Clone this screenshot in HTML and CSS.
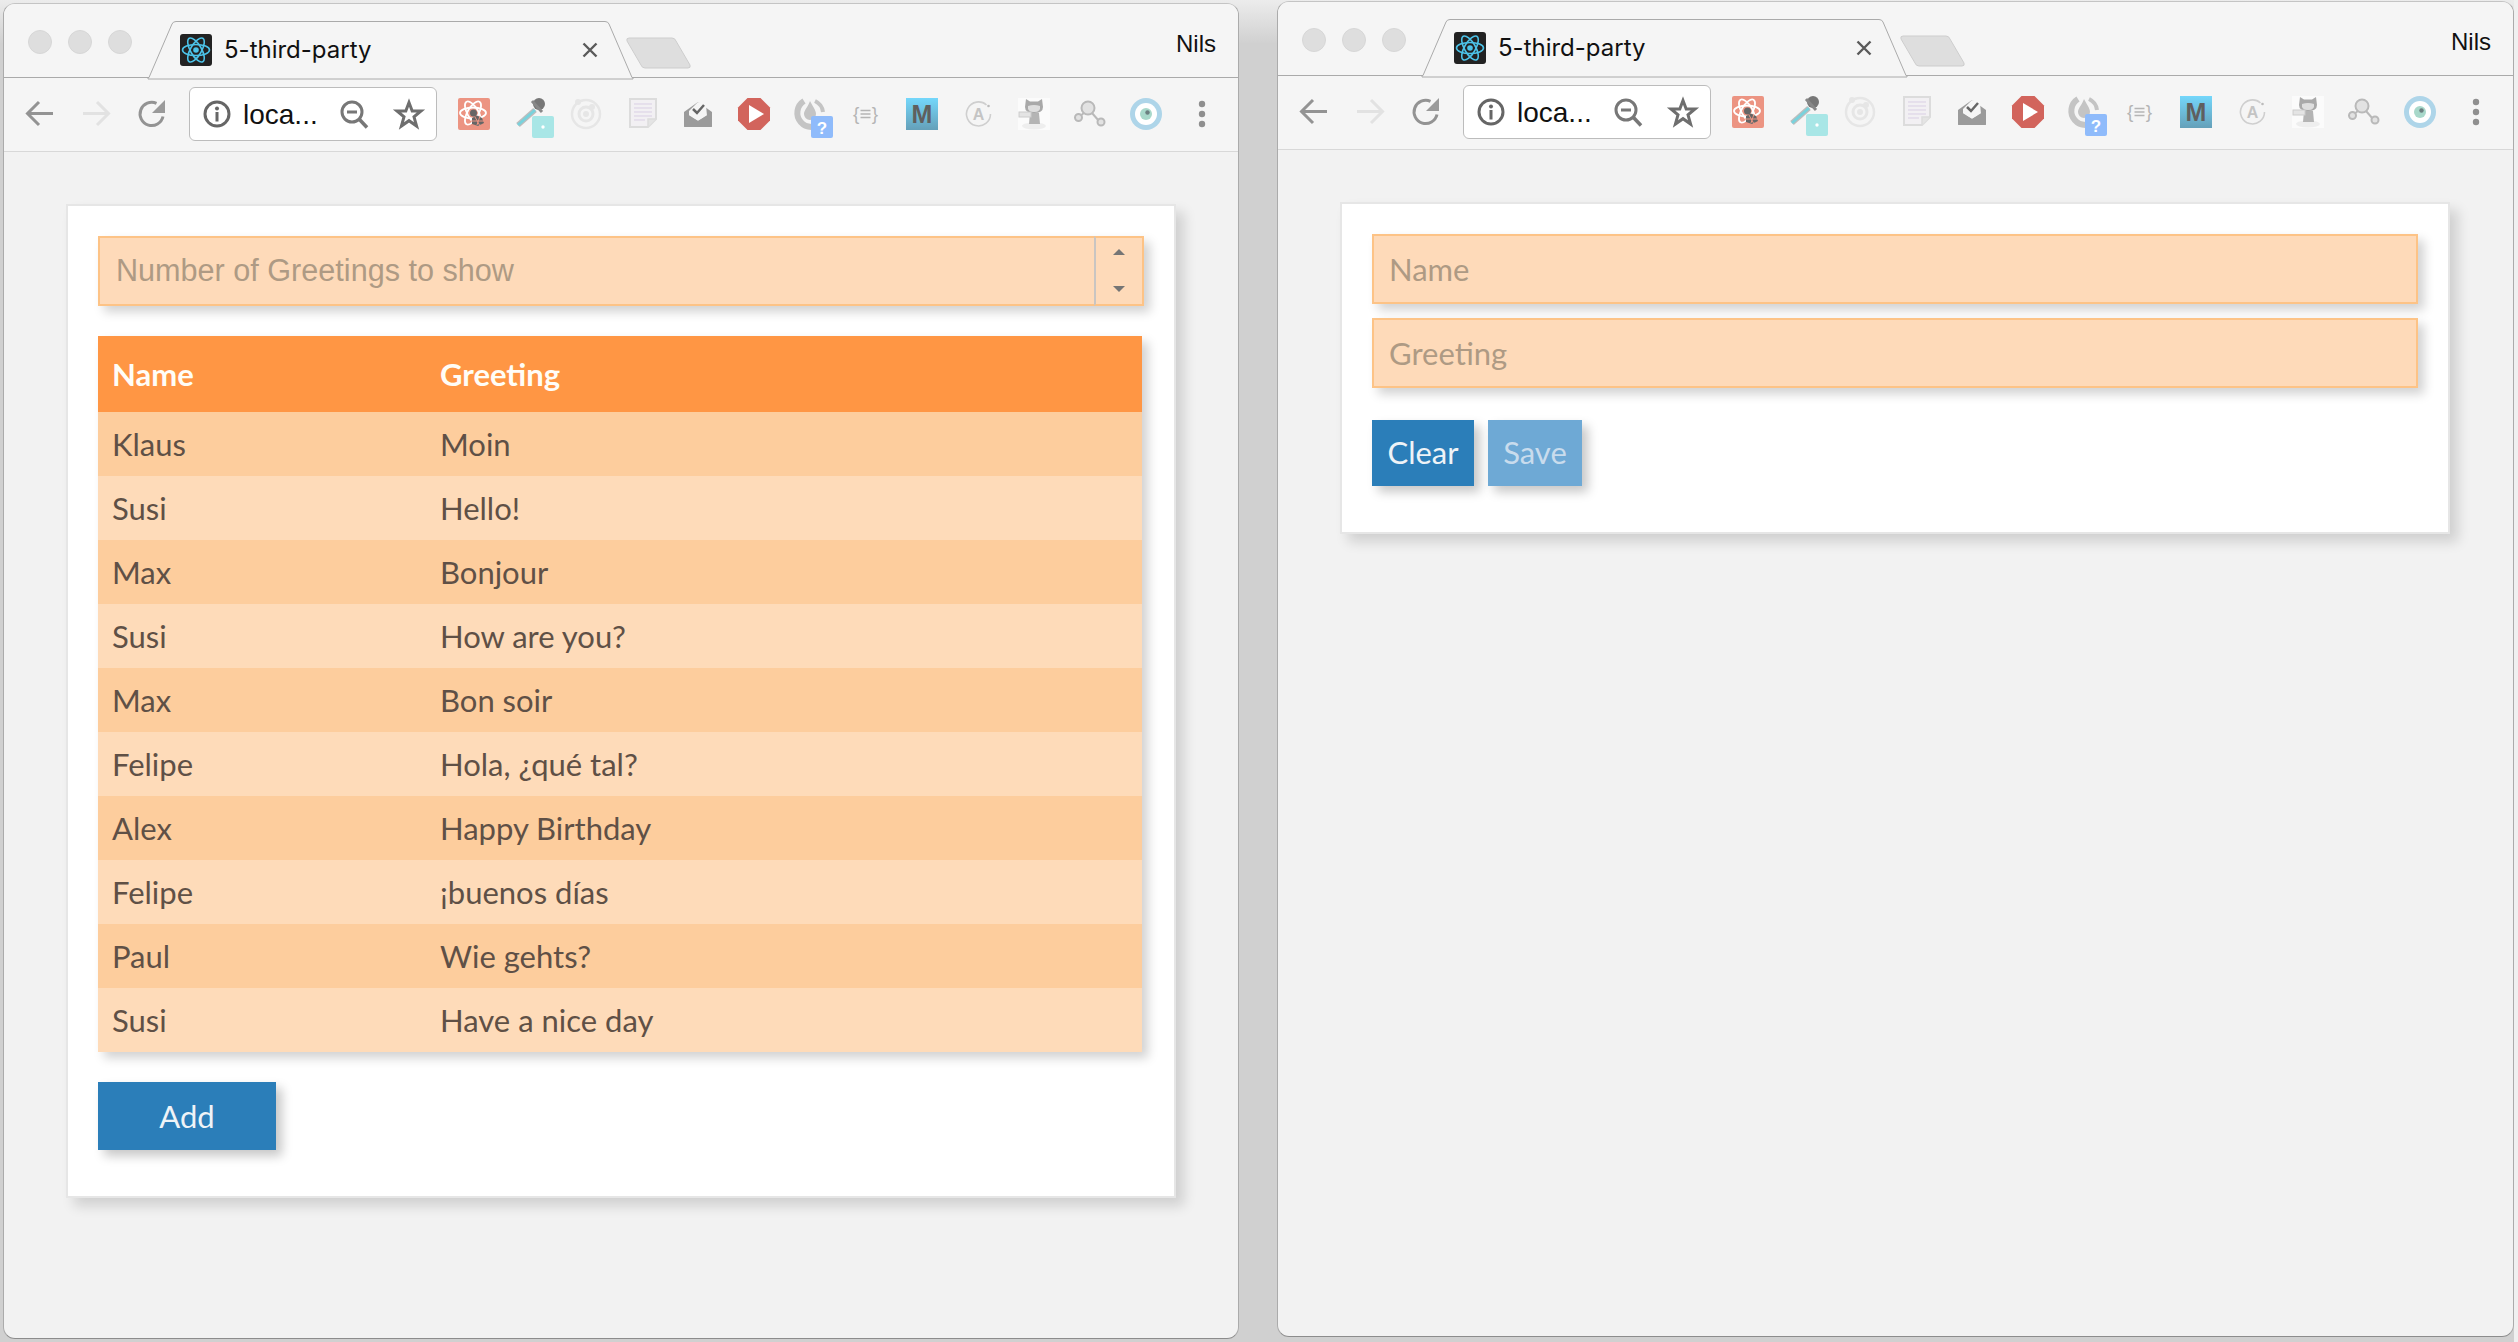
FILE: index.html
```html
<!DOCTYPE html>
<html lang="en">
<head>
<meta charset="utf-8">
<title>5-third-party</title>
<link rel="stylesheet" href="styles.css">
</head>
<body>
<svg class="sprite" width="0" height="0" aria-hidden="true">
  <defs>
    <g id="i-favicon">
      <rect width="32" height="32" rx="3" fill="#222"/>
      <g fill="none" stroke="#4cc3e8" stroke-width="1.6">
        <ellipse cx="16" cy="16" rx="13.5" ry="5.5"/>
        <ellipse cx="16" cy="16" rx="13.5" ry="5.5" transform="rotate(60 16 16)"/>
        <ellipse cx="16" cy="16" rx="13.5" ry="5.5" transform="rotate(120 16 16)"/>
      </g>
      <circle cx="16" cy="16" r="2.8" fill="#4cc3e8"/>
    </g>
    <g id="i-back"><path d="M29 15.5H5M15 4 3.5 15.5 15 27" fill="none" stroke-width="3"/></g>
    <g id="i-forward"><path d="M3 15.5H27M17 4 28.5 15.5 17 27" fill="none" stroke-width="3"/></g>
    <g id="i-reload">
      <path d="M27 18.5A11.6 11.6 0 1 1 20.500 5.400" fill="none" stroke-width="3"/>
      <path d="M29 2V15H16Z" stroke="none" fill="#9a9a9a"/>
    </g>
    <g id="i-info">
      <circle cx="14" cy="14" r="12" fill="none" stroke="#666" stroke-width="3"/>
      <circle cx="14" cy="8.500" r="2" fill="#666"/>
      <rect x="12.500" y="12" width="3" height="9.500" fill="#666"/>
    </g>
    <g id="i-zoom">
      <circle cx="12" cy="12" r="10" fill="none" stroke="#777" stroke-width="3"/>
      <path d="M7 12H17" stroke="#777" stroke-width="3"/>
      <path d="M19.500 19.500 27 27.500" stroke="#777" stroke-width="3.500"/>
    </g>
    <g id="i-star"><path d="M14 2.500 17.200 11H26L19 16.800 21.600 26 14 20.700 6.400 26 9 16.800 2 11H10.800Z" fill="none" stroke="#6e6e6e" stroke-width="3" stroke-linejoin="miter"/></g>
    <g id="i-devtools">
      <rect width="32" height="32" rx="2" fill="#ec9482"/>
      <g fill="none" stroke="#fff" stroke-width="1.800">
        <ellipse cx="15" cy="15" rx="13" ry="5.500"/>
        <ellipse cx="15" cy="15" rx="13" ry="5.500" transform="rotate(60 15 15)"/>
        <ellipse cx="15" cy="15" rx="13" ry="5.500" transform="rotate(120 15 15)"/>
      </g>
      <circle cx="15.500" cy="15" r="3.500" fill="#666"/>
      <path d="M14 20 19 17.500 24 20 26 25 20 28 14 26Z" fill="#666"/>
      <path d="M17 19 22 28M22 18 19 27M13 23H27" stroke="#ec9482" stroke-width="1"/>
    </g>
    <g id="i-dropper">
      <circle cx="25" cy="6" r="6" fill="#777"/>
      <path d="M18 3 28 14" stroke="#888" stroke-width="3"/>
      <path d="M21 12 4 27" stroke="#bdbdbd" stroke-width="5.500"/>
      <path d="M21 12 4 27" stroke="#79d2dc" stroke-width="3"/>
      <rect x="18" y="18" width="22" height="22" rx="2" fill="#a8e6e6"/>
      <circle cx="29" cy="29" r="1.700" fill="#fff"/>
    </g>
    <g id="i-ion" fill="none" stroke="#e6e6e6">
      <circle cx="16" cy="16" r="14" stroke-width="2.500"/>
      <circle cx="16" cy="16" r="7" stroke-width="3"/>
      <circle cx="16" cy="16" r="3" fill="#e6e6e6" stroke="none"/>
      <circle cx="8" cy="4" r="3" fill="#e6e6e6" stroke="none"/>
      <circle cx="22" cy="9" r="3" fill="#e6e6e6" stroke="none"/>
    </g>
    <g id="i-doc" transform="translate(3 0)">
      <path d="M1 1H27V21L19 29H1Z" fill="#f2f0f3" stroke="#dcdcdc" stroke-width="2"/>
      <path d="M19 29V21H27" fill="#e4e4e4" stroke="#dcdcdc" stroke-width="1.500"/>
      <path d="M5 6H23M5 10H23M5 14H23M5 18H23M5 22H16" stroke="#d9cfe4" stroke-width="1"/>
    </g>
    <g id="i-mail" transform="translate(2 2)">
      <path d="M0 12 14 2 28 12V26Q28 27 27 27H1Q0 27 0 26Z" fill="#9b9b9b"/>
      <path d="M5 11 14 2 22 5 23 16 14 21 5 16Z" fill="#f5f5f5"/>
      <path d="M9 9 13 13 20 5" fill="none" stroke="#666" stroke-width="2.500"/>
      <path d="M0 12 14 21 28 12V26Q28 27 27 27H1Q0 27 0 26Z" fill="#9b9b9b"/>
    </g>
    <g id="i-stop">
      <path d="M9.500 0H22.500L32 9.500V22.500L22.500 32H9.500L0 22.500V9.500Z" fill="#d2645c"/>
      <path d="M11 7 26 16 11 25Z" fill="#fff"/>
    </g>
    <g id="i-flame">
      <path d="M10 3A14 14 0 1 0 28 24" fill="none" stroke="#c4c4c4" stroke-width="6"/>
      <path d="M21 3A14 14 0 0 1 29 14" fill="none" stroke="#c4c4c4" stroke-width="4"/>
      <path d="M16 3C19 9 22 12 22 16A6 6 0 0 1 10 16C10 12 14 9 16 3Z" fill="#c4c4c4"/>
      <rect x="17" y="18" width="22" height="22" rx="2" fill="#8fbbfb"/>
      <text x="28" y="36" class="glyph-q">?</text>
    </g>
    <g id="i-json">
      <text x="3" y="22" class="glyph-brace">{</text>
      <text x="28" y="22" class="glyph-brace glyph-brace-end">}</text>
      <path d="M10.500 12.500H20.500M10.500 16H20.500M10.500 19.500H20.500" stroke="#b5b5b5" stroke-width="1.400"/>
    </g>
    <linearGradient id="g-m" x1="0" y1="0" x2="0" y2="1">
      <stop offset="0" stop-color="#74d7fb"/>
      <stop offset="1" stop-color="#65a0b9"/>
    </linearGradient>
    <g id="i-m">
      <rect width="32" height="32" fill="url(#g-m)"/>
      <text x="16" y="25" class="glyph-m">M</text>
    </g>
    <g id="i-a">
      <path d="M24.500 7A12 12 0 1 0 28.500 16" fill="none" stroke="#cfcfcf" stroke-width="1.600"/>
      <circle cx="26.500" cy="8" r="1.300" fill="#bbb"/>
      <text x="16.500" y="22" class="glyph-a">A</text>
    </g>
    <g id="i-octocat">
      <rect width="32" height="32" fill="#fbfbfb"/>
      <ellipse cx="16" cy="28" rx="12" ry="3.500" fill="#eee"/>
      <path d="M8 1 12 3.500H20L24 1 25 9Q25 15 16 15T7 9Z" fill="#a9a9a9"/>
      <path d="M10 8Q16 6 22 8 23 14 16 14T10 8Z" fill="#dedede"/>
      <path d="M12 15H21L22 26H11Z" fill="#b4b4b4"/>
      <rect x="1" y="14" width="12" height="5" fill="#e4e4e4" stroke="#ccc"/>
    </g>
    <g id="i-nodes" fill="#e2e2e2" stroke="#b9b9b9" stroke-width="2">
      <path d="M10 15 6 18M18 15 25 23" fill="none"/>
      <circle cx="14" cy="10" r="6.500"/>
      <circle cx="4.500" cy="19.500" r="3.500"/>
      <circle cx="27" cy="24" r="3.500"/>
    </g>
    <g id="i-eye">
      <circle cx="16" cy="16" r="16" fill="#aed5e9"/>
      <circle cx="16" cy="16" r="11" fill="#fff"/>
      <circle cx="16" cy="16" r="6" fill="#a8d8ca"/>
      <circle cx="17.500" cy="14.500" r="2.200" fill="#6b7f80"/>
    </g>
    <g id="i-more" fill="#8f8f8f">
      <circle cx="16" cy="6" r="3.200"/>
      <circle cx="16" cy="16" r="3.200"/>
      <circle cx="16" cy="26" r="3.200"/>
    </g>
    <g id="i-tab-close"><path d="M1.500 1.500 14.500 14.500M14.500 1.500 1.500 14.500" stroke="#5a5a5a" stroke-width="2.400"/></g>
  </defs>
</svg>

<section class="window window-left">
  <header class="tabstrip">
    <div class="traffic"><span class="light"></span><span class="light"></span><span class="light"></span></div>
    <div class="tab">
      <svg class="tab-shape" viewBox="0 0 485 57" preserveAspectRatio="none"><path d="M0 56.500H1L24 3Q25 .5 28 .5H457Q460 .5 461 3L484 56.500H485V58H0Z"/></svg>
      <svg class="favicon" viewBox="0 0 32 32"><use href="#i-favicon"/></svg>
      <span class="tab-title">5-third-party</span>
      <svg class="tab-close" viewBox="0 0 16 16"><use href="#i-tab-close"/></svg>
    </div>
    <svg class="newtab" viewBox="0 0 66 32"><path d="M3 1H46Q49 1 50 4L64 28Q65 31 62 31H19Q16 31 15 28L1 4Q0 1 3 1Z"/></svg>
    <span class="profile">Nils</span>
  </header>
  <nav class="toolbar">
    <svg class="tool nav-on" viewBox="0 0 32 32"><use href="#i-back"/></svg>
    <svg class="tool nav-off" viewBox="0 0 32 32"><use href="#i-forward"/></svg>
    <svg class="tool nav-on" viewBox="0 0 32 32"><use href="#i-reload"/></svg>
    <div class="omnibox">
      <svg class="omni-icon" viewBox="0 0 28 28"><use href="#i-info"/></svg>
      <span class="omni-url">loca...</span>
      <svg class="omni-icon" viewBox="0 0 28 28"><use href="#i-zoom"/></svg>
      <svg class="omni-icon" viewBox="0 0 28 28"><use href="#i-star"/></svg>
    </div>
    <svg class="tool" viewBox="0 0 32 32"><use href="#i-devtools"/></svg>
    <svg class="tool" viewBox="0 0 32 32"><use href="#i-dropper"/></svg>
    <svg class="tool" viewBox="0 0 32 32"><use href="#i-ion"/></svg>
    <svg class="tool" viewBox="0 0 32 32"><use href="#i-doc"/></svg>
    <svg class="tool" viewBox="0 0 32 32"><use href="#i-mail"/></svg>
    <svg class="tool" viewBox="0 0 32 32"><use href="#i-stop"/></svg>
    <svg class="tool" viewBox="0 0 32 32"><use href="#i-flame"/></svg>
    <svg class="tool" viewBox="0 0 32 32"><use href="#i-json"/></svg>
    <svg class="tool" viewBox="0 0 32 32"><use href="#i-m"/></svg>
    <svg class="tool" viewBox="0 0 32 32"><use href="#i-a"/></svg>
    <svg class="tool" viewBox="0 0 32 32"><use href="#i-octocat"/></svg>
    <svg class="tool" viewBox="0 0 32 32"><use href="#i-nodes"/></svg>
    <svg class="tool" viewBox="0 0 32 32"><use href="#i-eye"/></svg>
    <svg class="tool" viewBox="0 0 32 32"><use href="#i-more"/></svg>
  </nav>
  <main class="content">
    <div class="card">
      <div class="number-field">
        <input class="field field-number" type="text" placeholder="Number of Greetings to show">
        <div class="stepper"><span class="step-up"></span><span class="step-down"></span></div>
      </div>
      <table class="greetings">
        <thead><tr><th>Name</th><th>Greeting</th></tr></thead>
        <tbody>
          <tr><td>Klaus</td><td>Moin</td></tr>
          <tr><td>Susi</td><td>Hello!</td></tr>
          <tr><td>Max</td><td>Bonjour</td></tr>
          <tr><td>Susi</td><td>How are you?</td></tr>
          <tr><td>Max</td><td>Bon soir</td></tr>
          <tr><td>Felipe</td><td>Hola, ¿qué tal?</td></tr>
          <tr><td>Alex</td><td>Happy Birthday</td></tr>
          <tr><td>Felipe</td><td>¡buenos días</td></tr>
          <tr><td>Paul</td><td>Wie gehts?</td></tr>
          <tr><td>Susi</td><td>Have a nice day</td></tr>
        </tbody>
      </table>
      <button class="btn btn-add" type="button">Add</button>
    </div>
  </main>
</section>

<section class="window window-right">
  <header class="tabstrip">
    <div class="traffic"><span class="light"></span><span class="light"></span><span class="light"></span></div>
    <div class="tab">
      <svg class="tab-shape" viewBox="0 0 485 57" preserveAspectRatio="none"><path d="M0 56.500H1L24 3Q25 .5 28 .5H457Q460 .5 461 3L484 56.500H485V58H0Z"/></svg>
      <svg class="favicon" viewBox="0 0 32 32"><use href="#i-favicon"/></svg>
      <span class="tab-title">5-third-party</span>
      <svg class="tab-close" viewBox="0 0 16 16"><use href="#i-tab-close"/></svg>
    </div>
    <svg class="newtab" viewBox="0 0 66 32"><path d="M3 1H46Q49 1 50 4L64 28Q65 31 62 31H19Q16 31 15 28L1 4Q0 1 3 1Z"/></svg>
    <span class="profile">Nils</span>
  </header>
  <nav class="toolbar">
    <svg class="tool nav-on" viewBox="0 0 32 32"><use href="#i-back"/></svg>
    <svg class="tool nav-off" viewBox="0 0 32 32"><use href="#i-forward"/></svg>
    <svg class="tool nav-on" viewBox="0 0 32 32"><use href="#i-reload"/></svg>
    <div class="omnibox">
      <svg class="omni-icon" viewBox="0 0 28 28"><use href="#i-info"/></svg>
      <span class="omni-url">loca...</span>
      <svg class="omni-icon" viewBox="0 0 28 28"><use href="#i-zoom"/></svg>
      <svg class="omni-icon" viewBox="0 0 28 28"><use href="#i-star"/></svg>
    </div>
    <svg class="tool" viewBox="0 0 32 32"><use href="#i-devtools"/></svg>
    <svg class="tool" viewBox="0 0 32 32"><use href="#i-dropper"/></svg>
    <svg class="tool" viewBox="0 0 32 32"><use href="#i-ion"/></svg>
    <svg class="tool" viewBox="0 0 32 32"><use href="#i-doc"/></svg>
    <svg class="tool" viewBox="0 0 32 32"><use href="#i-mail"/></svg>
    <svg class="tool" viewBox="0 0 32 32"><use href="#i-stop"/></svg>
    <svg class="tool" viewBox="0 0 32 32"><use href="#i-flame"/></svg>
    <svg class="tool" viewBox="0 0 32 32"><use href="#i-json"/></svg>
    <svg class="tool" viewBox="0 0 32 32"><use href="#i-m"/></svg>
    <svg class="tool" viewBox="0 0 32 32"><use href="#i-a"/></svg>
    <svg class="tool" viewBox="0 0 32 32"><use href="#i-octocat"/></svg>
    <svg class="tool" viewBox="0 0 32 32"><use href="#i-nodes"/></svg>
    <svg class="tool" viewBox="0 0 32 32"><use href="#i-eye"/></svg>
    <svg class="tool" viewBox="0 0 32 32"><use href="#i-more"/></svg>
  </nav>
  <main class="content">
    <div class="card">
      <input class="field field-text" type="text" placeholder="Name">
      <input class="field field-text" type="text" placeholder="Greeting">
      <div class="actions">
        <button class="btn btn-clear" type="button">Clear</button>
        <button class="btn btn-save" type="button">Save</button>
      </div>
    </div>
  </main>
</section>
</body>
</html>
```

FILE: styles.css
```css
* { box-sizing: border-box; }

html, body { height: 100%; }

body {
  margin: 0;
  overflow: hidden;
  font-family: "Lato", "Liberation Sans", sans-serif;
  background:
    linear-gradient(to right, transparent 2514px, #f0f0f0 2514px),
    linear-gradient(to bottom, #ececec 0, #d0d0d0 44px);
}

.sprite { position: absolute; }

/* desktop windows */
.window {
  position: absolute;
  height: 1336px;
  display: flex;
  flex-direction: column;
  overflow: hidden;
  background: #f2f2f2;
  border: 1px solid #ababab;
  border-top-color: #c4c4c4;
  border-bottom-color: #8c8c8c;
  border-radius: 12px;
}

.window-left { left: 3px; top: 3px; width: 1236px; }
.window-right { left: 1277px; top: 1px; width: 1237px; }

/* tab strip */
.tabstrip {
  flex: none;
  display: flex;
  align-items: flex-start;
  height: 74px;
  background: #f5f5f5;
  border-bottom: 1px solid #aaa;
}

.traffic {
  display: flex;
  gap: 16px;
  margin: 26px 16px 0 24px;
}

.light {
  width: 24px;
  height: 24px;
  border-radius: 50%;
  background: #dedede;
  border: 1px solid #d7d7d7;
}

.tab {
  position: relative;
  flex: none;
  width: 485px;
  height: 57px;
  margin-top: 17px;
  padding: 13px 35px 0 32px;
  display: flex;
  align-items: flex-start;
}

.tab-shape {
  position: absolute;
  left: 0;
  top: 0;
  width: 485px;
  height: 57px;
  overflow: visible;
  fill: #f5f5f5;
  stroke: none;
}

.tab-shape path { stroke: #aaa; stroke-width: 1; }

.favicon {
  position: relative;
  flex: none;
  width: 32px;
  height: 32px;
}

.tab-title {
  position: relative;
  flex: 1;
  margin-left: 12px;
  font: 24px/32px "Inter", "Liberation Sans", sans-serif;
  color: #111;
}

.tab-close {
  position: relative;
  flex: none;
  width: 16px;
  height: 16px;
  margin-top: 8px;
}

.newtab {
  flex: none;
  width: 66px;
  height: 32px;
  margin: 33px 0 0 -7px;
  fill: #dedede;
  stroke: #cdcdcd;
  stroke-width: 1;
}

.profile {
  margin: 25px 22px 0 auto;
  font: 24px/30px "Liberation Sans", sans-serif;
  color: #111;
}

/* toolbar */
.toolbar {
  flex: none;
  display: flex;
  align-items: flex-start;
  gap: 24px;
  height: 74px;
  padding: 9px 0 0 20px;
  background: #f5f5f5;
  border-bottom: 1px solid #d8d8d8;
}

.tool {
  flex: none;
  width: 32px;
  height: 32px;
  margin-top: 11px;
  overflow: visible;
}

.nav-on { stroke: #939393; }
.nav-off { stroke: #e2e2e2; }

.omnibox {
  flex: none;
  display: flex;
  align-items: center;
  width: 248px;
  height: 54px;
  margin: 0 -3px;
  padding: 0 13px;
  background: #fff;
  border: 1px solid #bcbcbc;
  border-radius: 6px;
}

.omni-icon {
  flex: none;
  width: 28px;
  height: 28px;
  overflow: visible;
}

.omni-icon:last-child { margin-left: 27px; }

.omni-url {
  flex: 1;
  margin: 2px 0 0 12px;
  font: 28px/34px "Liberation Sans", sans-serif;
  color: #111;
}

/* page */
.content {
  flex: 1;
  padding: 52px 0 0 62px;
}

.card {
  width: 1110px;
  padding: 30px 30px 46px;
  background: #fff;
  border: 2px solid #e6e6e6;
  box-shadow: 8px 8px 12px rgba(0, 0, 0, .14);
}

.field {
  display: block;
  width: 100%;
  height: 70px;
  margin: 0;
  padding: 0 16px 1px;
  background: #fedab9;
  border: 2px solid #fdc386;
  border-radius: 0;
  outline: none;
  color: #5f5046;
  box-shadow: 6px 6px 10px rgba(0, 0, 0, .18);
}

.field::placeholder { color: #ae9a84; opacity: 1; }

.field-text {
  font: 31px "Lato", sans-serif;
  margin-bottom: 14px;
  padding-left: 15px;
}

.number-field {
  display: flex;
  height: 70px;
  box-shadow: 6px 6px 10px rgba(0, 0, 0, .18);
}

.field-number {
  flex: 1;
  width: auto;
  min-width: 0;
  border-right: 0;
  box-shadow: none;
  padding-bottom: 2px;
  font: 30.6px "Liberation Sans", sans-serif;
}

.stepper {
  flex: none;
  width: 50px;
  display: flex;
  flex-direction: column;
  align-items: center;
  justify-content: space-between;
  padding: 11px 0 12px;
  background: #fedab9;
  border: 2px solid #fdc386;
  border-left: 2px solid #c9c5c2;
}

.step-up, .step-down {
  width: 0;
  height: 0;
  border-left: 6px solid transparent;
  border-right: 6px solid transparent;
}

.step-up { border-bottom: 6px solid #757575; }
.step-down { border-top: 6px solid #757575; }

.greetings {
  width: 1044px;
  margin: 30px 0;
  table-layout: fixed;
  border-collapse: collapse;
  box-shadow: 6px 6px 10px rgba(0, 0, 0, .18);
  font-size: 31px;
  color: #5f5046;
}

.greetings th, .greetings td {
  padding: 0 14px;
  text-align: left;
}

.greetings th:first-child, .greetings td:first-child { width: 328px; }

.greetings th {
  height: 76px;
  background: #ff9644;
  color: #fffdf7;
  font-weight: 700;
}

.greetings td { height: 64px; }

.greetings tbody tr:nth-child(odd) { background: #fdcd9d; }
.greetings tbody tr:nth-child(even) { background: #fedbb9; }

.btn {
  display: block;
  height: 68px;
  padding: 0;
  border: 0;
  border-radius: 0;
  background: #2b7eb9;
  color: #eef3f7;
  font: 31px "Lato", sans-serif;
  box-shadow: 6px 6px 10px rgba(0, 0, 0, .22);
}

.btn-add { width: 178px; }

.actions {
  display: flex;
  gap: 14px;
  margin-top: 32px;
}

.btn-clear { width: 102px; height: 66px; padding-bottom: 2px; }
.btn-save {
  width: 94px;
  height: 66px;
  padding-bottom: 2px;
  background: #6ea9d5;
  color: #c9dced;
}

/* letters inside extension logos */
.glyph-q { font: 700 17px "Liberation Sans", sans-serif; fill: #fff; text-anchor: middle; }
.glyph-brace { font: 19px "Liberation Sans", sans-serif; fill: #b5b5b5; }
.glyph-brace-end { text-anchor: end; }
.glyph-m { font: 700 25px "Liberation Sans", sans-serif; fill: #5f5f5f; text-anchor: middle; }
.glyph-a { font: 700 16px "Liberation Sans", sans-serif; fill: #c4c4c4; text-anchor: middle; }
```
